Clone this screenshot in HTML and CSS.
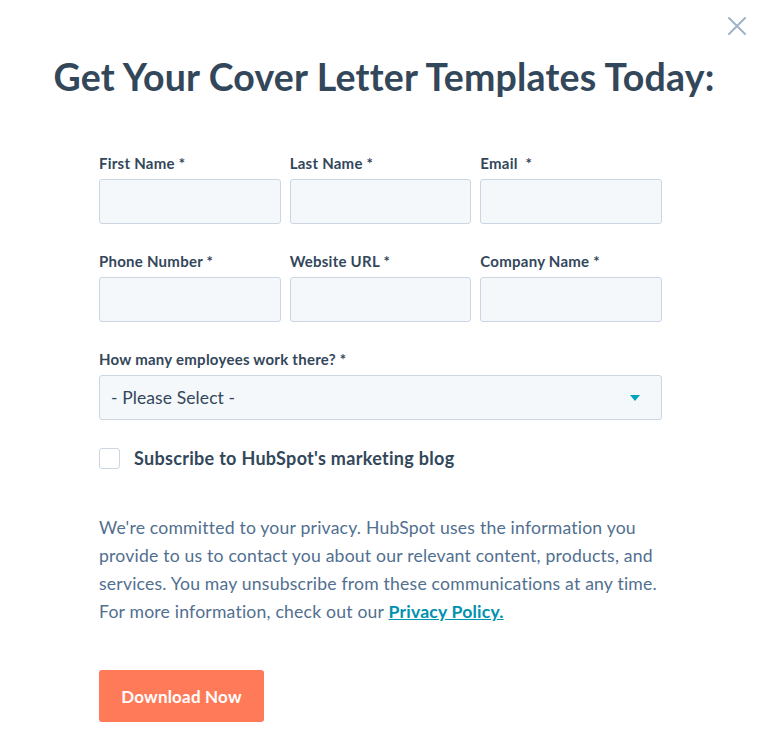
FILE: index.html
```html
<!DOCTYPE html>
<html>
<head>
<meta charset="utf-8">
<link rel="stylesheet" href="styles.css">
</head>
<body>
<div class="modal">
  <button class="close" aria-label="Close">
    <svg width="20" height="20" viewBox="0 0 20 20"><path d="M2 2 L18 18 M18 2 L2 18" stroke="#9fb3c8" stroke-width="2" stroke-linecap="round" fill="none"/></svg>
  </button>
  <h1 class="title">Get Your Cover Letter Templates Today:</h1>
  <form class="form">
    <div class="row3">
      <div class="field"><label class="label">First Name <span class="req">*</span></label><div class="input"></div></div>
      <div class="field"><label class="label">Last Name <span class="req">*</span></label><div class="input"></div></div>
      <div class="field"><label class="label">Email &nbsp;<span class="req">*</span></label><div class="input"></div></div>
    </div>
    <div class="row3">
      <div class="field"><label class="label">Phone Number <span class="req">*</span></label><div class="input"></div></div>
      <div class="field"><label class="label">Website URL <span class="req">*</span></label><div class="input"></div></div>
      <div class="field"><label class="label">Company Name <span class="req">*</span></label><div class="input"></div></div>
    </div>
    <div class="field">
      <label class="label">How many employees work there? <span class="req">*</span></label>
      <div class="input select"><span>- Please Select -</span><span class="caret"></span></div>
    </div>
    <div class="check">
      <span class="box"></span>
      <span class="check-text">Subscribe to HubSpot's marketing blog</span>
    </div>
    <p class="privacy">We're committed to your privacy. HubSpot uses the information you provide to us to contact you about our relevant content, products, and services. You may unsubscribe from these communications at any time. For more information, check out our <a class="link" href="#">Privacy Policy.</a></p>
    <div class="actions"><span class="btn">Download Now</span></div>
  </form>
</div>
</body>
</html>
```
FILE: styles.css
```css
* { box-sizing: border-box; }
html, body { margin: 0; padding: 0; background: #fff; }
body { font-family: Lato, "Open Sans", sans-serif; color: #33475b; }
.modal { position: relative; width: 768px; height: 745px; padding-top: 55px; }
.close { position: absolute; top: 16px; right: 21px; border: 0; background: none; padding: 0; width: 20px; height: 20px; }
.close svg { display: block; }
.title { margin: 0; text-align: center; font-size: 37.5px; font-weight: 700; line-height: 44px; letter-spacing: 0.2px; color: #33475b; }
.form { width: 563px; margin: 53px 0 0 99px; }
.row3 { display: grid; grid-template-columns: repeat(3, 1fr); column-gap: 9px; margin-bottom: 26px; }
.field { display: flex; flex-direction: column; }
.label { font-size: 15px; font-weight: 700; line-height: 22px; margin-bottom: 5px; letter-spacing: 0.25px; color: #33475b; }
.req { color: #33475b; }
.input { height: 45px; background: #f5f8fa; border: 1px solid #cbd6e2; border-radius: 3px; }
.select { display: flex; align-items: center; justify-content: space-between; padding: 0 21px 0 11px; font-size: 17.5px; color: #33475b; letter-spacing: 0.1px; }
.caret { width: 0; height: 0; border-left: 5px solid transparent; border-right: 5px solid transparent; border-top: 6px solid #00a4bd; }
.check { display: flex; align-items: center; margin-top: 27px; height: 22px; }
.box { width: 21px; height: 21px; border: 1px solid #cbd6e2; border-radius: 3px; background: #fff; margin-right: 14px; }
.check-text { font-size: 18px; font-weight: 700; color: #33475b; letter-spacing: 0.3px; }
.privacy { margin: 45px 0 0; font-size: 17.6px; line-height: 28px; color: #516f90; letter-spacing: 0.2px; }
.link { color: #0091ae; font-weight: 700; text-decoration: underline; }
.actions { margin-top: 44px; }
.btn { display: inline-flex; align-items: center; justify-content: center; width: 165px; height: 52px; background: #ff7a59; color: #fff; border-radius: 3px; font-size: 17px; font-weight: 700; letter-spacing: 0.2px; }
```
